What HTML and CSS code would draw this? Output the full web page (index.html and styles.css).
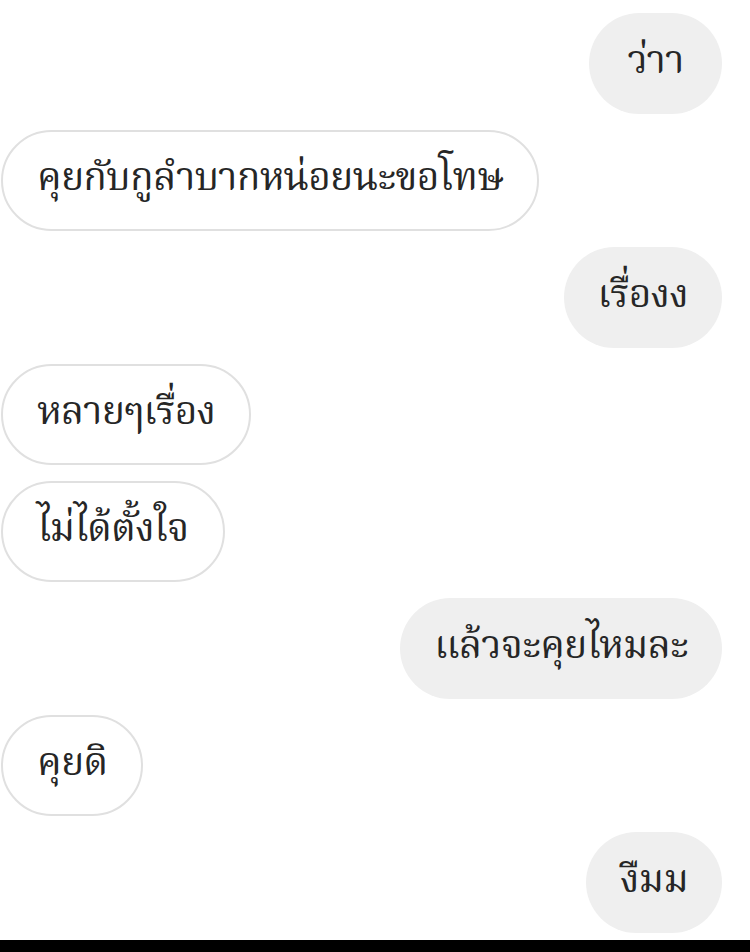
FILE: index.html
```html
<!DOCTYPE html>
<html lang="th">
<head>
  <meta charset="UTF-8">
  <title>Chat</title>
  <link rel="stylesheet" href="styles.css">
</head>
<body>
<div class="chat">
  <div class="msg me"><span class="bubble">ว่าา</span></div>
  <div class="msg them"><span class="bubble">คุยกับกูลำบากหน่อยนะขอโทษ</span></div>
  <div class="msg me"><span class="bubble">เรื่องง</span></div>
  <div class="msg them"><span class="bubble">หลายๆเรื่อง</span></div>
  <div class="msg them"><span class="bubble">ไม่ได้ตั้งใจ</span></div>
  <div class="msg me"><span class="bubble">แล้วจะคุยไหมละ</span></div>
  <div class="msg them"><span class="bubble">คุยดิ</span></div>
  <div class="msg me"><span class="bubble">งืมม</span></div>
</div>
<div class="navbar"></div>
</body>
</html>
```

FILE: styles.css
```css
body {
  margin: 0;
  background: #ffffff;
  font-family: "Noto Serif Thai", "Noto Sans Thai", sans-serif;
  color: #262626;
}
.chat {
  height: 940px;
  overflow: hidden;
  display: flex;
  flex-direction: column;
  gap: 16px;
  padding: 13px 28px 0 1px;
  box-sizing: border-box;
}
.msg {
  display: flex;
}
.msg.me {
  justify-content: flex-end;
}
.msg.them {
  justify-content: flex-start;
}
.bubble {
  display: flex;
  align-items: center;
  height: 101px;
  box-sizing: border-box;
  padding: 0 34px 2px;
  border-radius: 51px;
  font-size: 39px;
  font-weight: 400;
  letter-spacing: -0.8px;
  white-space: nowrap;
}
.me .bubble {
  background: #efefef;
  min-width: 133px;
  justify-content: center;
}
.them .bubble {
  background: #ffffff;
  border: 2px solid #e0e0e0;
}
.navbar {
  height: 12px;
  background: #000000;
}
```
